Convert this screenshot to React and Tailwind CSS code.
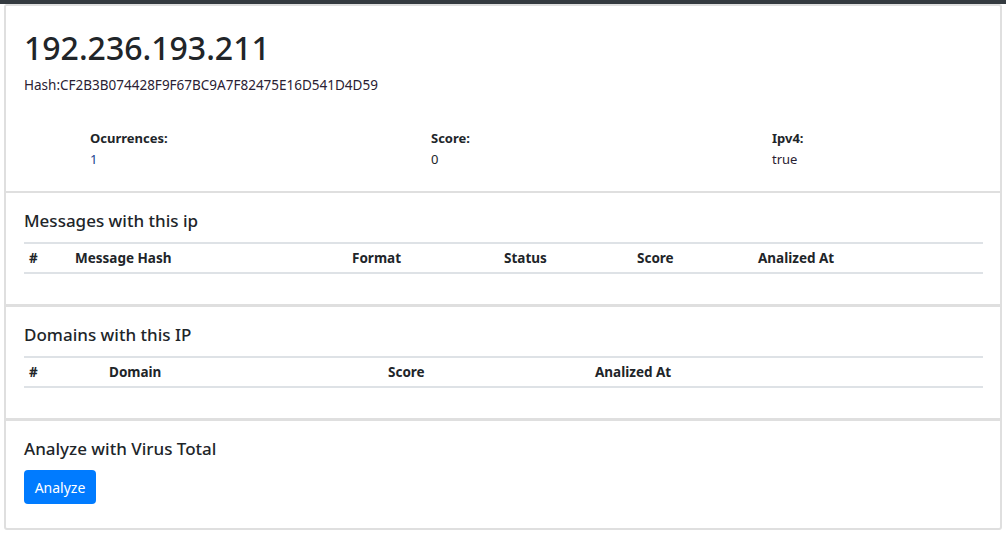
import React from 'react';

const font = { fontFamily: '"Noto Sans", "Open Sans", sans-serif' };

const Table = ({ cols }) => (
    <table className="w-[959px] border-collapse text-[13.5px] text-[#212529]">
        <thead>
            <tr className="border-t-2 border-b-2 border-[#dee2e6]">
                {cols.map(c => (
                    <th
                        key={c.label}
                        className="h-[30px] p-0 text-left font-bold align-middle"
                        style={{ width: c.w, paddingLeft: c.pl ?? 0 }}
                    >
                        {c.label}
                    </th>
                ))}
            </tr>
        </thead>
    </table>
);

const Card = ({ title, children, className = '' }) => (
    <div className={`border-2 border-[#dfdfdf] bg-white px-[18px] ${className}`}>
        <h5 className="text-[17px] leading-[17px] font-medium text-[#212529] pt-[19px] pb-[13px]">{title}</h5>
        {children}
    </div>
);

export default function App() {
    return (
        <div className="min-h-[533px] bg-white" style={font}>
            <div className="h-[4px] bg-[#343a40]" />
            <div className="px-[4px]">
                {/* IP header */}
                <div className="border-2 border-b-0 border-[#dfdfdf] rounded-t-[3px] px-[18px] pt-[22px] pb-[22px]">
                    <h1 className="text-[32px] leading-[40px] text-[#212529] font-medium">192.236.193.211</h1>
                    <p className="text-[13.5px] leading-[20px] mt-[7px] text-[#2a2133]">Hash:CF2B3B074428F9F67BC9A7F82475E16D541D4D59</p>
                    <div className="grid grid-cols-[341px_341px_1fr] pl-[66px] mt-[33px] text-[13px] leading-[20px]">
                        <div>
                            <div className="font-bold text-[#212529]">Ocurrences:</div>
                            <div className="text-[#1c3f8f] mt-[1px]">1</div>
                        </div>
                        <div>
                            <div className="font-bold text-[#212529]">Score:</div>
                            <div className="text-[#212529] mt-[1px]">0</div>
                        </div>
                        <div>
                            <div className="font-bold text-[#212529]">Ipv4:</div>
                            <div className="text-[#2a2133] mt-[1px]">true</div>
                        </div>
                    </div>
                </div>

                <Card title="Messages with this ip" className="border-b-[1px] pb-[30px]">
                    <Table
                        cols={[
                            { label: '#', w: 51, pl: 5 },
                            { label: 'Message Hash', w: 277 },
                            { label: 'Format', w: 152 },
                            { label: 'Status', w: 133 },
                            { label: 'Score', w: 121 },
                            { label: 'Analized At' },
                        ]}
                    />
                </Card>

                <Card title="Domains with this IP" className="border-b-[1px] pb-[30px]">
                    <Table
                        cols={[
                            { label: '#', w: 85, pl: 5 },
                            { label: 'Domain', w: 279 },
                            { label: 'Score', w: 207 },
                            { label: 'Analized At' },
                        ]}
                    />
                </Card>

                <Card title="Analyze with Virus Total" className="pb-[24px] rounded-b-[3px]">
                    <button className="bg-[#007bff] text-white text-[14px] rounded-[4px] w-[72px] h-[34px]">
                        Analyze
                    </button>
                </Card>
            </div>
        </div>
    );
}
